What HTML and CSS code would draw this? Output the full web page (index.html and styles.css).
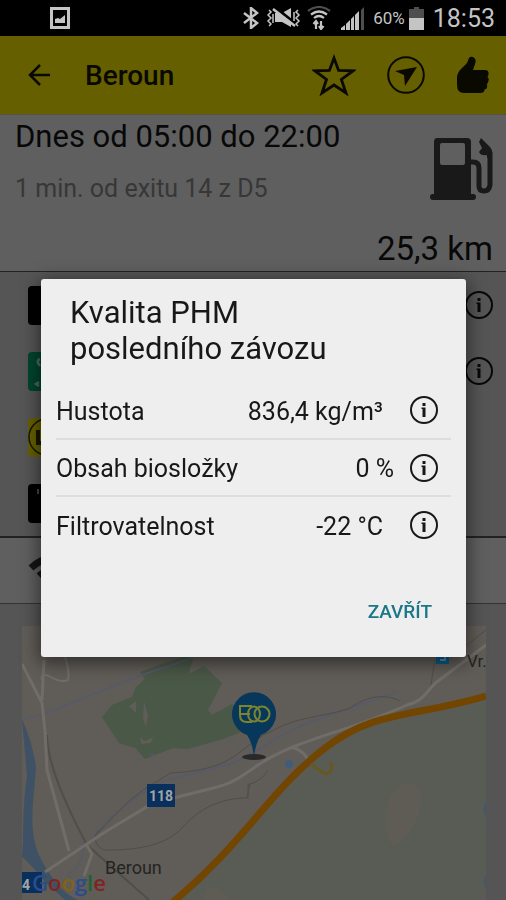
FILE: index.html
```html
<!DOCTYPE html>
<html lang="cs">
<head>
<meta charset="utf-8">
<meta name="viewport" content="width=device-width, initial-scale=1">
<title>Beroun</title>
<link rel="stylesheet" href="styles.css">
</head>
<body>
<svg class="defs" aria-hidden="true">
  <symbol id="info" viewBox="0 0 30 30">
    <circle cx="15" cy="15" r="13" fill="none" stroke="currentColor" stroke-width="2"/>
    <path d="M13.500 8h3v3h-3zM12.500 12.500h4V22h-3v-8h-1z" fill="currentColor"/>
  </symbol>
</svg>

<div class="status">
  <svg class="status-picture" width="20" height="22" viewBox="0 0 20 22" aria-hidden="true">
    <rect x="1.500" y="1.500" width="17" height="19" fill="none" stroke="currentColor" stroke-width="3"/>
    <path d="M5 16v-4l3-1 2 1 5-4v8z" fill="currentColor"/>
  </svg>
  <div class="status-icons">
    <svg width="18" height="22" viewBox="0 0 18 22" fill="none" stroke="currentColor" stroke-width="2.500" aria-hidden="true"><path d="M2 6l13 10-6 5V1l6 5L2 16"/></svg>
    <svg class="status-mute" width="34" height="22" viewBox="0 0 34 22" aria-hidden="true">
      <path d="M8 6h7l9-5v19l-9-5H8z" fill="currentColor"/>
      <path d="M9 1l21 17" stroke="#000" stroke-width="3"/>
      <path d="M6 2l22 17" stroke="currentColor" stroke-width="2.500"/>
      <path d="M2 3l2 2-3 3 3 3-3 3 3 3-2 2M6 7v9M31 3l-2 2 3 3-3 3 3 3-3 3 2 2M27 5v9" fill="none" stroke="currentColor" stroke-width="1.500"/>
    </svg>
    <svg class="status-wifi" width="24" height="24" viewBox="0 0 24 24" fill="none" stroke="currentColor" stroke-width="2.200" aria-hidden="true">
      <path d="M1 5q11-8 22 0" opacity=".4"/><path d="M4 8.500q8-6 16 0M7 12q5-4 10 0"/>
      <path d="M9 23v-8M6.500 18L9 15l2 3M14 15v8M12 20l2 3 2.500-3"/>
    </svg>
    <svg class="status-signal" width="24" height="23" viewBox="0 0 24 23" fill="currentColor" aria-hidden="true">
      <path d="M0 23v-2l4-3v5zM5 23v-6l4-4v10zM10 23V12l3-3v14zM14 23V8l4-4v19z"/><path d="M20 23V3l3-3v23z" opacity=".4"/>
    </svg>
    <span class="status-percent">60%</span>
    <svg class="status-battery" width="15" height="23" viewBox="0 0 15 23" fill="currentColor" aria-hidden="true">
      <path d="M0 2h5V0h5v2h5v9H0z" opacity=".4"/><path d="M0 11h15v12H0z"/>
    </svg>
    <time class="status-time">18:53</time>
  </div>
</div>

<header class="toolbar">
  <button class="icon-button" aria-label="Zpět">
    <svg width="24" height="24" viewBox="0 0 24 24" fill="none" stroke="currentColor" stroke-width="2.500" aria-hidden="true"><path d="M23 12H3M13 2L3 12l10 10"/></svg>
  </button>
  <h1 class="toolbar-title">Beroun</h1>
  <div class="toolbar-actions">
    <button class="icon-button" aria-label="Oblíbené">
      <svg width="44" height="42" viewBox="0 0 44 42" fill="none" stroke="currentColor" stroke-width="2.800" aria-hidden="true"><path d="M22 4l4.600 12.500 14.400.4-11.600 8.500L34 39l-12-8-12 8 4.500-13.600L3 16.900l14.400-.4z"/></svg>
    </button>
    <button class="icon-button" aria-label="Navigovat">
      <svg width="38" height="38" viewBox="0 0 38 38" aria-hidden="true"><circle cx="19" cy="19" r="17.800" fill="none" stroke="currentColor" stroke-width="2"/><path d="M30 11L18 30l-1-11-9-4z" fill="currentColor"/></svg>
    </button>
    <button class="icon-button" aria-label="To se mi líbí">
      <svg width="34" height="38" viewBox="0 0 34 38" fill="currentColor" aria-hidden="true"><path d="M1 22q0-5 4-9l6-6 2-5q1-2 4-1 4 2 2 7l-2 6h12q4 0 3.500 4 0 2-1 3 2 2 1 4-.5 2-1.500 3 1 5-2.500 5.500 0 3.500-4.500 3.500H8q-7 0-7-8z"/></svg>
    </button>
  </div>
</header>

<main class="station">
  <section class="summary">
    <div class="summary-top">
      <div>
        <p class="hours">Dnes od 05:00 do 22:00</p>
        <p class="exit">1 min. od exitu 14 z D5</p>
      </div>
      <svg class="pump" width="64" height="64" viewBox="0 0 64 64" aria-hidden="true">
        <path fill="currentColor" fill-rule="evenodd" d="M8 1h30q4 0 4 4v52h2q3 0 3 3t-3 3H4q-3 0-3-3t3-3h1V5q0-4 3-4zm5 5q-2 0-2 2v18q0 2 2 2h21q2 0 2-2V8q0-2-2-2z"/>
        <path fill="none" stroke="currentColor" stroke-width="5" stroke-linecap="round" d="M42 25h2q6 0 6 6v18q0 5 5 5t6-6V16"/>
        <path fill="currentColor" d="M52 1l9 9q2 2 2 6v5h-5v-3q-6 1-8-3l3-4-3-6z"/>
      </svg>
    </div>
    <p class="distance">25,3 km</p>
  </section>

  <ul class="fuels">
    <li class="fuel"><span class="fuel-badge"></span><button class="icon-button" aria-label="Informace"><svg width="30" height="30"><use href="#info"/></svg></button></li>
    <li class="fuel">
      <svg class="fuel-badge fuel-badge-green" viewBox="0 0 39 39" aria-hidden="true"><path d="M12 7q-3 1-2 4l2 3M11 30l-3 2 3 2" fill="none" stroke="#4c6c5c" stroke-width="2.500"/></svg>
      <button class="icon-button" aria-label="Informace"><svg width="30" height="30"><use href="#info"/></svg></button>
    </li>
    <li class="fuel"><svg class="fuel-badge fuel-badge-yellow" viewBox="0 0 39 39" aria-hidden="true"><circle cx="19" cy="19" r="18" fill="none" stroke="#161600" stroke-width="1.500"/><path d="M10 12v13h8" fill="none" stroke="#161600" stroke-width="4"/></svg></li>
    <li class="fuel"><svg class="fuel-badge" viewBox="0 0 39 39" aria-hidden="true"><path d="M10 5v5" stroke="#444" stroke-width="2"/></svg></li>
  </ul>

  <section class="services">
    <svg width="44" height="34" viewBox="0 0 44 34" fill="none" stroke="currentColor" stroke-width="7" aria-hidden="true"><path d="M3 14q19-18 38 0M11 22q11-10 22 0M18 29q4-3 8 0"/></svg>
  </section>

  <section class="map-section">
    <svg class="map" viewBox="22 626 464 274" preserveAspectRatio="xMidYMin slice" role="img" aria-label="Mapa">
      <rect x="22" y="626" width="464" height="274" fill="#605c57"/>
      <path d="M486 701C400 718 375 708 315 760C265 805 220 858 178 900H486z" fill="#595c55"/>
      <path d="M102 717l10-12 20-8 4-10 9-8-5-7 24-9 30-9-5 20 15-8 18 17-14 27 4 5 20-11 12 11-3 17-18 7-35 10-15-1-28 11-10-11-16-5zM129 706l7-5v12zM144 701l4 15-2 11-3-9zM140 737l5 4 8-4-2 6-10 1z" fill="#4a5847" fill-rule="evenodd"/>
      <path d="M386 811q5-24 20-29 20 3 15 26-9 30-28 38-10-11-7-35zM205 890q13-8 25 10h-27z" fill="#5e5c55"/>
      <path d="M22 719q10 22 14 48c-2 32-8 60 2 86q18 38 40 47H65L45 882q-16-20-23-25l1-15q0-40 4-66z" fill="#3f5265"/>
      <g fill="none" stroke="#555a6c" stroke-width="1.500">
        <path d="M22 720l25-7 74-30 24-9 30-10 18-7M90 842q25-35 72-60c70-20 60-10 110-41 45-26 75-30 125-49M83 842q2 22-14 31M68 875l15 25M150 755h5"/>
      </g>
      <g fill="none" stroke="#4f4e4a">
        <path d="M47 735q0 35 40 110l62 55" stroke-width="2"/>
        <path d="M98 833c45-50 52-45 72-60 70-3 68-28 102-42 24-14 45-13 76-22 20-13 35-16 52-8M250 783l-3 15c-20 0-44 6-65 30-20 22-60 22-78 22-12-6-9-16-5-20M268 770q-5 10-20 15v14M430 690l5-30M467 645l19-15"/>
      </g>
      <g fill="none" stroke="#706d69" stroke-width="3">
        <path d="M22 664l20 39 3 28 2 39 22 81M42 700l2-40M45 872l60-40 45-27c70-22 70-12 105-38 40-28 85-32 152-62 18-4 20-16 31-24l48-36M86 844l6 10-8 22M292 747q15 5 18 18"/>
        <path d="M42 680q-2-7 7-4 11 7 19 4 2-8-3-23" stroke-width="2"/>
      </g>
      <path d="M173 902C245 842 270 790 325 748C375 710 410 718 486 696" fill="none" stroke="#724500" stroke-width="7"/>
      <path d="M312 765q8 6 14 9 8-2 5-12" fill="none" stroke="#675822" stroke-width="3"/>
      <circle cx="289" cy="764" r="4" fill="#405b7c"/>
      <path d="M436 654h13v10h-13z" fill="#075b8b"/><path d="M440 656h5v4h-5" fill="none" stroke="#668597" stroke-width="2"/>
      <ellipse cx="254" cy="757" rx="12" ry="3" fill="#292929"/>
      <path d="M254 756q-2-14-7-21a22 22 0 1 1 14 0q-5 7-7 21z" fill="#07385b"/>
      <g fill="none" stroke="#7c852e" stroke-width="2"><path d="M252 706h-12v9q0 7 7 7h5M240 714h10"/><ellipse cx="254" cy="714" rx="6" ry="7.500"/><circle cx="262" cy="714" r="7.500"/></g>
      <rect x="147" y="784" width="28" height="23" fill="#092f5d"/>
      <text class="map-road" x="161" y="801" text-anchor="middle">118</text>
      <text class="map-place" x="105" y="874">Beroun</text>
      <text class="map-place-small" x="467" y="667">Vr.</text>
      <rect x="22" y="872" width="20" height="21" fill="#092f5d"/>
      <text class="map-road" x="22" y="890">4</text>
      <text class="map-brand" x="32" y="891"><tspan fill="#294d8d">G</tspan><tspan fill="#812421">o</tspan><tspan fill="#806313">o</tspan><tspan fill="#294d8d">g</tspan><tspan fill="#1c6432">l</tspan><tspan fill="#812421">e</tspan></text>
      <path d="M486 801q-5 6 0 18zM486 875q-5 6 0 13z" fill="#45586b"/>
    </svg>
  </section>
</main>

<div class="overlay">
  <div class="dialog" role="dialog" aria-modal="true" aria-labelledby="dialog-title">
    <h2 class="dialog-title" id="dialog-title">Kvalita PHM<br>posledního závozu</h2>
    <table class="quality">
      <tr><th scope="row">Hustota</th><td class="value">836,4 kg/m³</td><td class="action"><button class="icon-button" aria-label="Informace: Hustota"><svg width="30" height="30"><use href="#info"/></svg></button></td></tr>
      <tr><th scope="row">Obsah biosložky</th><td class="value value-percent">0 %</td><td class="action"><button class="icon-button" aria-label="Informace: Obsah biosložky"><svg width="30" height="30"><use href="#info"/></svg></button></td></tr>
      <tr><th scope="row">Filtrovatelnost</th><td class="value">-22 °C</td><td class="action"><button class="icon-button" aria-label="Informace: Filtrovatelnost"><svg width="30" height="30"><use href="#info"/></svg></button></td></tr>
    </table>
    <div class="dialog-actions"><button class="close">ZAVŘÍT</button></div>
  </div>
</div>
</body>
</html>
```
FILE: styles.css
```css
* { box-sizing: border-box; }

body {
  margin: 0;
  height: 100vh;
  overflow: hidden;
  display: flex;
  flex-direction: column;
  background: #555;
  color: #080808;
  font-family: Roboto, "Noto Sans", sans-serif;
}

h1, h2, p, ul { margin: 0; padding: 0; }
svg { display: block; flex-shrink: 0; }
.defs { position: absolute; width: 0; height: 0; }

.icon-button {
  display: block;
  padding: 0;
  border: 0;
  background: none;
  color: inherit;
}

.status {
  flex: none;
  height: 36px;
  padding: 0 11px 0 50px;
  display: flex;
  align-items: center;
  justify-content: space-between;
  background: #000;
  color: #c4c4c4;
}
.status-icons { display: flex; align-items: center; }
.status-mute { margin-left: 7px; }
.status-wifi { margin-left: 6px; }
.status-signal { margin-left: 10px; }
.status-percent { margin-left: 8px; font-size: 17px; line-height: 36px; }
.status-battery { margin-left: 4px; }
.status-time { margin-left: 9px; padding-top: 2px; font-size: 25px; line-height: 34px; }

.toolbar {
  flex: none;
  height: 79px;
  padding: 0 16px 0 27px;
  display: flex;
  align-items: center;
  background: #665f00;
  color: #090900;
  border-bottom: 1px solid #57533d;
}
.toolbar-title { margin-left: 34px; padding-top: 2px; font-size: 28px; line-height: 36px; font-weight: 500; }
.toolbar-actions { margin-left: auto; display: flex; align-items: center; gap: 31px; }

.station { flex: 1; display: flex; flex-direction: column; min-height: 0; }

.summary {
  flex: none;
  padding: 2px 13px 2px 15px;
  background: #5f5f5f;
  border-bottom: 1px solid #222;
}
.summary-top { display: flex; justify-content: space-between; }
.hours { font-size: 31px; line-height: 40px; }
.exit { margin-top: 16px; font-size: 25px; line-height: 32px; color: #373737; }
.pump { margin-top: 20px; color: #191919; }
.distance { margin-top: 24px; font-size: 33px; line-height: 40px; text-align: right; }

.fuels { list-style: none; border-bottom: 2px solid #222; }
.fuel {
  height: 66px;
  padding: 0 12px 0 28px;
  display: flex;
  align-items: center;
  justify-content: space-between;
}
.fuel-badge { width: 39px; height: 39px; border-radius: 4px; background: #000; }
.fuel-badge-green { background: #00452d; }
.fuel-badge-yellow { background: #666000; }

.services {
  flex: none;
  height: 66px;
  padding: 0 28px;
  display: flex;
  align-items: center;
  background: #5f5f5f;
  border-bottom: 1px solid #333;
  color: #151515;
}

.map-section { flex: 1; min-height: 0; padding: 22px 20px 0 22px; }
.map { width: 100%; height: 100%; }
.map-road { fill: #a2a5a6; font-size: 14px; font-weight: 700; }
.map-place { fill: #242422; font-size: 18px; }
.map-place-small { fill: #242422; font-size: 17px; }
.map-brand { font-family: "Open Sans", sans-serif; font-size: 22px; font-weight: 600; }

.overlay {
  position: fixed;
  inset: 36px 0 0;
  padding: 0 40px 0 41px;
  display: flex;
  align-items: center;
}
.dialog {
  width: 100%;
  padding: 16px 15px 21px;
  border-radius: 3px;
  background: #eee;
  color: #181818;
  box-shadow: 0 4px 18px 2px rgba(0, 0, 0, .5);
}
.dialog-title { margin: 0 14px 15px; font-size: 31px; line-height: 36px; font-weight: 400; }

.quality { width: 100%; border-collapse: collapse; font-size: 25px; line-height: 32px; }
.quality tr { height: 57px; }
.quality tr + tr { border-top: 2px solid #ddd; }
.quality th { padding: 3px 0 0; text-align: left; font-weight: 400; }
.quality td { padding: 0; }
.quality .value { padding: 3px 26px 0 0; text-align: right; }
.quality .value-percent { padding-right: 15px; }
.quality .action { width: 42px; }

.dialog-actions { margin-top: 35px; display: flex; justify-content: flex-end; }
.close {
  padding: 12px 19px;
  border: 0;
  background: none;
  color: #197788;
  font-family: inherit;
  font-size: 19px;
  line-height: 24px;
  font-weight: 500;
}
```
